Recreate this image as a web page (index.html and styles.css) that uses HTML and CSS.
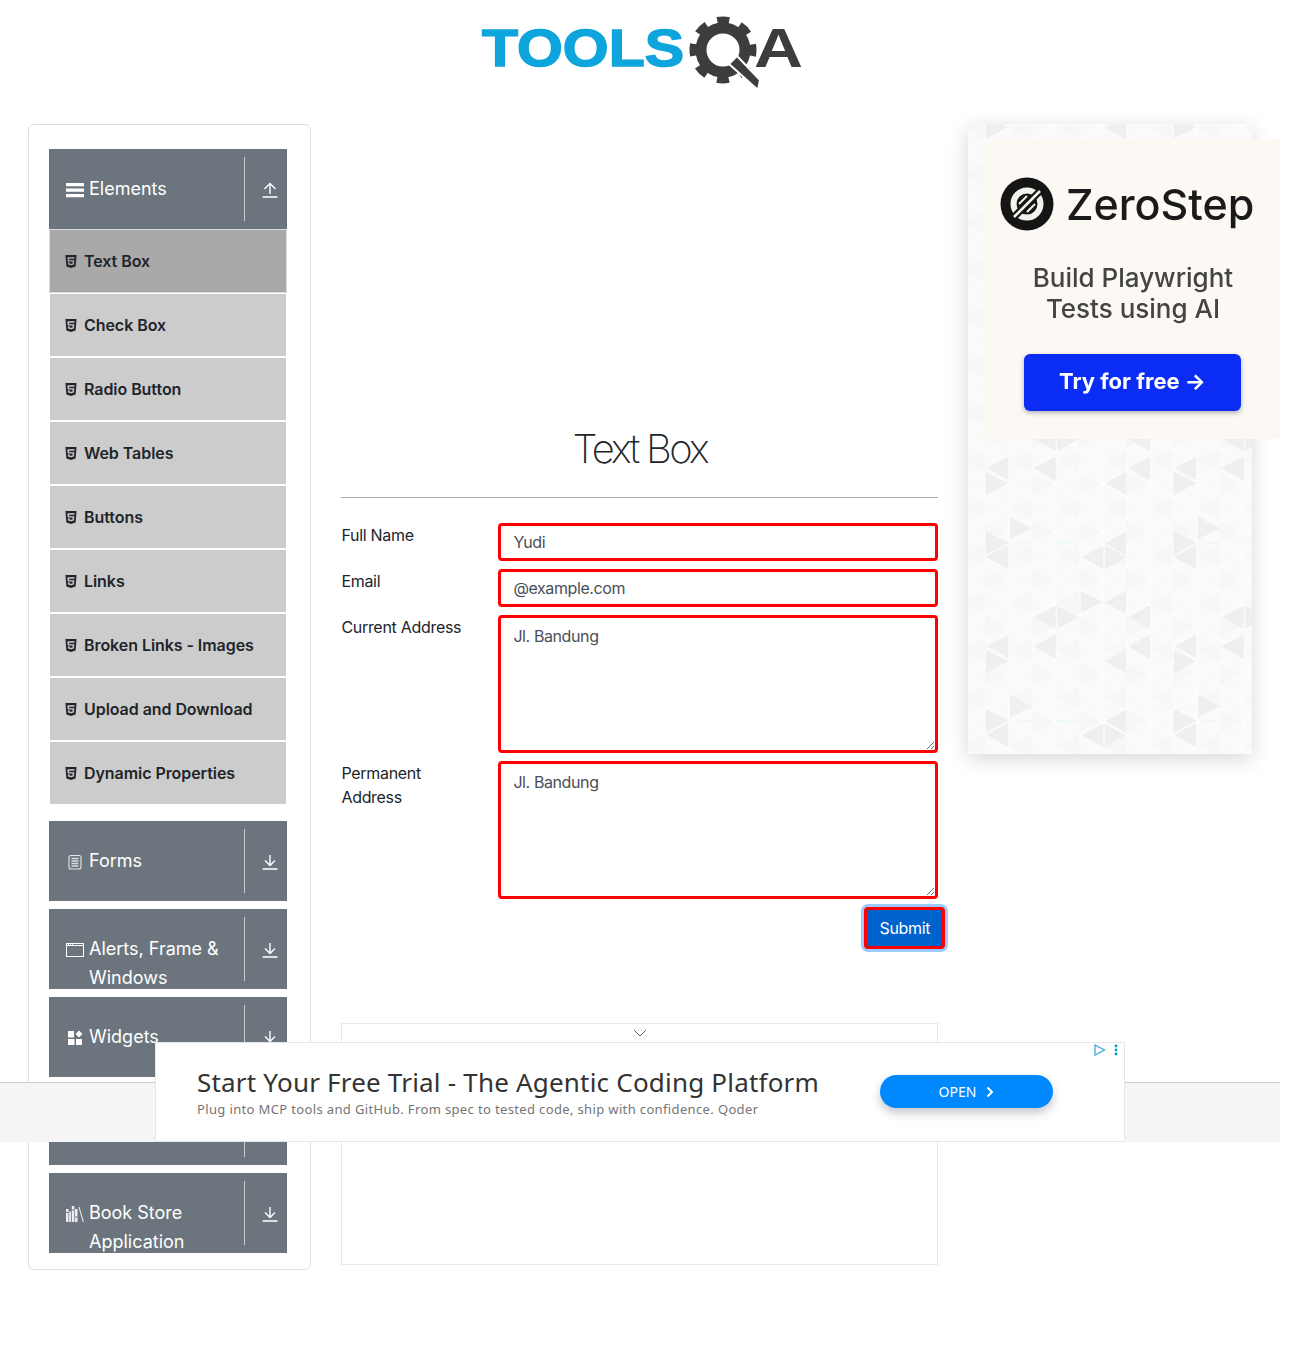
FILE: index.html
```html
<!DOCTYPE html>
<html lang="en">
<head>
<meta charset="utf-8">
<title>Text Box</title>
<link rel="stylesheet" href="styles.css">
</head>
<body>
<svg class="defs" width="0" height="0" aria-hidden="true">
  <defs>
    <symbol id="html5" viewBox="0 0 384 512"><path d="M0 32l34.9 395.8L191.5 480l157.6-52.2L384 32H0zm308.2 127.9H124.4l4.1 49.4h175.6l-13.6 148.4-97.9 27v.3h-1.1l-98.7-27.3-6-75.8h47.7L138 320l53.5 14.5 53.7-14.5 6-62.2H84.3L71.5 112.2h241.1l-4.4 47.7z"/></symbol>
    <symbol id="down" viewBox="0 0 16 16"><path d="M8 1v10M3 6.500 8 11.500l5-5M.5 15h15" fill="none" stroke="#fff" stroke-width="1.400"/></symbol>
    <symbol id="up" viewBox="0 0 16 16"><path d="M8 12V2M2.500 7 8 1.500 13.500 7M.5 15h15" fill="none" stroke="#fff" stroke-width="1.400"/></symbol>
  </defs>
</svg>

<header class="top">
  <svg class="logo" width="330" height="100" viewBox="0 0 330 100">
    <text x="5" y="66" class="logo-blue" textLength="202" lengthAdjust="spacingAndGlyphs">TOOLS</text>
    <circle cx="246" cy="50" r="22" fill="none" stroke="#3d3d3d" stroke-width="11"/>
    <circle cx="246" cy="50" r="30" fill="none" stroke="#3d3d3d" stroke-width="7" stroke-dasharray="12 11.56" stroke-dashoffset="6"/>
    <polygon points="252,64 260,56 283,80 281,90" fill="#3d3d3d" stroke="#fff" stroke-width="2"/>
    <text x="277" y="67" class="logo-dark" textLength="49" lengthAdjust="spacingAndGlyphs">A</text>
  </svg>
</header>

<main class="page">
  <aside class="side">
    <div class="elements">
      <div class="group">
        <div class="group-label">
          <svg class="gicon" viewBox="0 0 18 18"><path d="M0 2h18v3.200H0zM0 7.500h18v3.200H0zM0 13h18v3.200H0z" fill="#fff"/></svg>
          <span>Elements</span>
        </div>
        <div class="group-toggle"><svg class="arrow"><use href="#up"/></svg></div>
      </div>
      <ul class="items">
        <li class="item active"><svg class="h5"><use href="#html5"/></svg>Text Box</li>
        <li class="item"><svg class="h5"><use href="#html5"/></svg>Check Box</li>
        <li class="item"><svg class="h5"><use href="#html5"/></svg>Radio Button</li>
        <li class="item"><svg class="h5"><use href="#html5"/></svg>Web Tables</li>
        <li class="item"><svg class="h5"><use href="#html5"/></svg>Buttons</li>
        <li class="item"><svg class="h5"><use href="#html5"/></svg>Links</li>
        <li class="item"><svg class="h5"><use href="#html5"/></svg>Broken Links - Images</li>
        <li class="item"><svg class="h5"><use href="#html5"/></svg>Upload and Download</li>
        <li class="item"><svg class="h5"><use href="#html5"/></svg>Dynamic Properties</li>
      </ul>
    </div>
    <div class="group">
      <div class="group-label">
        <svg class="gicon" viewBox="0 0 18 18"><rect x="3" y="2.500" width="12" height="13.500" rx="2" fill="none" stroke="#e4e6e8" stroke-width="1.100"/><path d="M5.500 5.500h7M5.500 8h7M5.500 10.500h7M5.500 13h7" stroke="#d6d9dc" stroke-width="1.300"/></svg>
        <span>Forms</span>
      </div>
      <div class="group-toggle"><svg class="arrow"><use href="#down"/></svg></div>
    </div>
    <div class="group">
      <div class="group-label">
        <svg class="gicon" viewBox="0 0 18 18"><rect x=".5" y="2.500" width="17" height="13" fill="none" stroke="#fff" stroke-width="1"/><path d="M1 4.500h16" stroke="#fff" stroke-width="1"/><path d="M2 3.300h1M4 3.300h1M6 3.300h1" stroke="#fff" stroke-width="1"/></svg>
        <span>Alerts, Frame &amp; Windows</span>
      </div>
      <div class="group-toggle"><svg class="arrow"><use href="#down"/></svg></div>
    </div>
    <div class="group">
      <div class="group-label">
        <svg class="gicon" viewBox="0 0 18 18"><path d="M2 2h6v6.500H2zM2 10h6.500v6H2zM10 10h6v6h-6zM13 1.500l3.500 3.500-3.500 3.500L9.500 5z" fill="#fff"/></svg>
        <span>Widgets</span>
      </div>
      <div class="group-toggle"><svg class="arrow"><use href="#down"/></svg></div>
    </div>
    <div class="group">
      <div class="group-label">
        <svg class="gicon" viewBox="0 0 18 18"><rect x="3" y="3" width="12" height="12" fill="#fff"/></svg>
        <span>Interactions</span>
      </div>
      <div class="group-toggle"><svg class="arrow"><use href="#down"/></svg></div>
    </div>
    <div class="group">
      <div class="group-label">
        <svg class="gicon" viewBox="0 0 18 18"><path d="M0 4h2.500v13H0zM3.200 6.500H5V17H3.200zM5.800 1h2.500v16H5.800zM9 4h2.500v13H9zM12.500 2l1-.3 4.300 15-1 .3z" fill="#eceeef"/><path d="M0 7.500h2.500M5.800 5h2.500M9 12h2.500" stroke="#6c757d" stroke-width="1"/></svg>
        <span>Book Store Application</span>
      </div>
      <div class="group-toggle"><svg class="arrow"><use href="#down"/></svg></div>
    </div>
  </aside>

  <section class="center">
    <h1 class="title">Text Box</h1>
    <hr class="rule">
    <form class="form">
      <label class="lbl">Full Name</label>
      <input class="field" type="text" value="Yudi">
      <label class="lbl">Email</label>
      <input class="field" type="text" value="@example.com">
      <label class="lbl">Current Address</label>
      <textarea class="field area">Jl. Bandung</textarea>
      <label class="lbl">Permanent Address</label>
      <textarea class="field area">Jl. Bandung</textarea>
      <button class="submit" type="button">Submit</button>
    </form>
    <div class="adslot">
      <svg class="caret" width="14" height="8" viewBox="0 0 14 8"><path d="M1 1l6 6 6-6" fill="none" stroke="#666" stroke-width="1"/></svg>
    </div>
  </section>

  <aside class="right">
    <svg class="tess" width="284" height="630" aria-hidden="true">
      <defs>
        <pattern id="lat" patternUnits="userSpaceOnUse" width="47" height="47.500" viewBox="0 0 141 142" patternTransform="translate(-8 16)">
          <rect width="141" height="142" fill="#fafafa"/>
          <path d="M4 0 4 142M74.500 0 74.500 142" stroke="#fff" stroke-width="2"/>
          <path d="M4 35 74.500 0M4 35 74.500 71M4 106 74.500 71M4 106 74.500 142M74.500 0 145 35M74.500 71 145 35M74.500 71 145 106M74.500 142 145 106" stroke="#fff" stroke-width="2.500" fill="none"/>
          <path d="M74.500 0 141 35 74.500 71zM4 106 74.500 71V142z" fill="#f7f7f7"/>
        </pattern>
        <pattern id="tri" patternUnits="userSpaceOnUse" width="188" height="178" viewBox="0 0 564 534" patternTransform="translate(-8 138)">
          <g fill="#efefef">
            <path d="M80 85 145 50V120zM220 85 287 50V122zM505 85 568 50V122zM78 95 145 130 78 165zM435 130 498 95V165zM150 230 215 265 150 298zM78 272 145 308 78 345zM78 350 145 315V388zM435 310 498 275V345zM365 352 430 317V388zM435 317 498 352 435 388zM362 453 428 487 362 520zM435 487 498 452V520zM222 532 287 497V567zM292 497 355 532 292 567zM505 532 568 497V567zM222 -2 287 -37V33zM292 -37 355 -2 292 33zM505 -2 568 -37V33z"/>
            <path d="M-59 85 6 50V120zM-59 -2 6 -37V33zM-59 532 6 497V567z"/>
          </g>
          <path d="M170 308h45M290 308h65" stroke="#e9f9f7" stroke-width="4"/>
        </pattern>
      </defs>
      <rect width="284" height="630" fill="url(#lat)"/>
      <rect width="284" height="630" fill="url(#tri)"/>
    </svg>
    <div class="zs">
      <div class="zs-brand">
        <svg class="zs-logo" width="54" height="54" viewBox="0 0 54 54">
          <circle cx="27" cy="27" r="26.500" fill="#151515"/>
          <circle cx="27" cy="27" r="13.500" fill="none" stroke="#f4f1ec" stroke-width="6"/>
          <path d="M13 41 41 13" stroke="#151515" stroke-width="7"/>
          <path d="M14 40 40 14" stroke="#f4f1ec" stroke-width="2.500"/>
          <path d="M19 27l8-8M27 35l8-8" stroke="#f4f1ec" stroke-width="2"/>
        </svg>
        <span class="zs-name">ZeroStep</span>
      </div>
      <p class="zs-copy">Build Playwright<br>Tests using AI</p>
      <div class="zs-btn">Try for free →</div>
    </div>
  </aside>
</main>

<div class="banner">
  <div class="banner-ad">
    <div class="ad-text">
      <div class="ad-title">Start Your Free Trial - The Agentic Coding Platform</div>
      <div class="ad-sub">Plug into MCP tools and GitHub. From spec to tested code, ship with confidence. Qoder</div>
    </div>
    <div class="ad-open">OPEN
      <svg width="8" height="12" viewBox="0 0 8 12"><path d="M1.500 1.500 6 6l-4.500 4.500" fill="none" stroke="#fff" stroke-width="2"/></svg>
    </div>
    <div class="ad-choices">
      <svg width="12" height="12" viewBox="0 0 12 12"><path d="M1 1v10l9.500-5z" fill="none" stroke="#3fa9e0" stroke-width="1.300"/></svg>
      <svg width="4" height="12" viewBox="0 0 4 12"><circle cx="2" cy="2" r="1.400" fill="#00a0c6"/><circle cx="2" cy="6" r="1.400" fill="#00a0c6"/><circle cx="2" cy="10" r="1.400" fill="#00a0c6"/></svg>
    </div>
  </div>
</div>
</body>
</html>
```

FILE: styles.css
```css
* { box-sizing: border-box; }

html, body { margin: 0; padding: 0; }

body {
  position: relative;
  width: 1280px;
  min-height: 1370px;
  background: #fff;
  color: #212529;
  font-family: Inter, "Liberation Sans", sans-serif;
  font-size: 16px;
  line-height: 24px;
}

.defs { position: absolute; }

.top {
  display: flex;
  justify-content: center;
  height: 124px;
  padding-left: 3px;
}

.logo { display: block; filter: blur(.3px); }

.logo-blue {
  font: 700 52px "Liberation Sans", sans-serif;
  fill: #0ea5dd;
  stroke: #0ea5dd;
  stroke-width: 1.500px;
}

.logo-dark {
  font: 700 55px "Liberation Sans", sans-serif;
  fill: #3d3d3d;
}

.page {
  display: flex;
  align-items: flex-start;
  gap: 30px;
  padding-left: 28px;
}

/* sidebar */
.side {
  flex: none;
  width: 283.400px;
  padding: 24px 24px 16px 20px;
  border: 1px solid #dfdfdf;
  border-radius: 6px;
  display: flex;
  flex-direction: column;
  gap: 8px;
}

.elements { margin-bottom: 8px; }

.group {
  display: flex;
  width: 238px;
  height: 80px;
  padding: 8px 0;
  background: #6c757d;
  color: #fff;
  overflow: hidden;
}

.group-label {
  flex: none;
  width: 195px;
  height: 90px;
  padding: 17px 0 0 40px;
  position: relative;
  font-size: 18px;
  line-height: 29px;
  overflow: visible;
}

.gicon {
  position: absolute;
  left: 17px;
  top: 24px;
  width: 18px;
  height: 18px;
}

.group-toggle {
  flex: 1;
  display: flex;
  justify-content: center;
  align-items: center;
  padding-top: 2px;
  border-left: 1px solid #c9ccce;
  padding-left: 7px;
}

.arrow { width: 16px; height: 16px; }

.items { list-style: none; margin: 0; padding: 0; width: 238px; }

.item {
  display: flex;
  align-items: center;
  height: 64px;
  padding-left: 15px;
  background: #ccc;
  border: 1px solid #fff;
  font-weight: 600;
  font-size: 16px;
  letter-spacing: -.06px;
  color: #212529;
}

.item.active {
  background: #a9a9a9;
  border-color: #dadde0;
}

.h5 {
  width: 12px;
  height: 15px;
  margin-right: 7px;
  fill: #23272b;
}

/* centre */
.center { flex: none; width: 596.600px; }

.title {
  margin: 0;
  padding-top: 301px;
  height: 349px;
  text-align: center;
  font-size: 40px;
  line-height: 48px;
  font-weight: 200;
  letter-spacing: -2.700px;
  color: #212529;
}

.rule {
  margin: 24px 0 25px;
  border: 0;
  border-top: 1px solid #aaa;
}

.form {
  display: grid;
  grid-template-columns: 157px 440px;
  row-gap: 8px;
  align-items: start;
}

.lbl {
  padding-right: 20px;
  letter-spacing: -.3px;
  color: #212529;
}

.field {
  display: block;
  width: 440px;
  height: 38px;
  margin: 0;
  padding: 0 12px;
  border: 3px solid #f00;
  border-radius: 4px;
  background: #fff;
  color: #495057;
  font: 16px/24px Inter, "Liberation Sans", sans-serif;
  letter-spacing: -.4px;
  outline: 0;
}

.area {
  height: 138px;
  padding-top: 6px;
  padding-bottom: 6px;
}

.submit {
  grid-column: 2;
  justify-self: end;
  width: 81px;
  height: 42px;
  margin-right: -7px;
  padding: 0;
  border: 3px solid #f00;
  border-radius: 4px;
  background: #0062cc;
  color: #fff;
  font: 16px/24px Inter, "Liberation Sans", sans-serif;
  letter-spacing: -.3px;
  box-shadow: 0 0 0 3px #9ccbff;
}

.adslot {
  position: relative;
  height: 242px;
  margin-top: 74px;
  border: 1px solid #e8e8e8;
  display: flex;
  justify-content: center;
  padding-top: 5px;
}

.caret { display: block; }

/* right ad */
.right {
  position: relative;
  flex: none;
  width: 284px;
  height: 630px;
  box-shadow: 0 5px 20px rgba(0, 0, 0, .16);
}

.tess { display: block; }

.zs {
  position: absolute;
  left: 15px;
  top: 15px;
  width: 300px;
  height: 300px;
  background: #fcf8f3;
  display: flex;
  flex-direction: column;
  align-items: center;
  filter: blur(.35px);
}

.zs-brand {
  display: flex;
  align-items: center;
  gap: 12px;
  width: 100%;
  padding: 38px 0 0 17px;
  height: 92px;
}

.zs-logo { flex: none; }

.zs-name {
  font-size: 43px;
  line-height: 54px;
  font-weight: 500;
  color: #1a1a1a;
  white-space: nowrap;
}

.zs-copy {
  margin: 31px 0 0;
  width: 100%;
  text-align: center;
  font-size: 26px;
  line-height: 31px;
  font-weight: 500;
  color: #444;
}

.zs-btn {
  width: 217px;
  height: 57px;
  margin: 30px 1px 0 0;
  border-radius: 6px;
  background: #0a2cf5;
  color: #fff;
  text-align: center;
  font-size: 22px;
  line-height: 55px;
  font-weight: 700;
  box-shadow: 0 2px 5px rgba(0, 0, 40, .3);
}

/* fixed banner */
.banner {
  position: absolute;
  left: 0;
  top: 1082px;
  width: 1280px;
  height: 60px;
  background: #f5f5f5;
  border-top: 1px solid #ccc;
}

.banner-ad {
  position: absolute;
  left: 155px;
  bottom: 0;
  width: 970px;
  height: 100px;
  background: #fff;
  border: 1px solid #e6e6e6;
  display: flex;
  align-items: center;
  font-family: "Noto Sans", sans-serif;
}

.ad-text { flex: none; width: 724px; padding: 0 0 0 41px; }

.ad-title {
  font-size: 26px;
  line-height: 32px;
  letter-spacing: .2px;
  color: #333;
  white-space: nowrap;
}

.ad-sub {
  margin-top: 2px;
  font-size: 13px;
  line-height: 18px;
  letter-spacing: .36px;
  color: #757575;
  white-space: nowrap;
}

.ad-open {
  flex: none;
  display: flex;
  align-items: center;
  justify-content: center;
  gap: 10px;
  width: 173px;
  height: 33px;
  margin-top: -1px;
  border-radius: 17px;
  background: #0088ff;
  color: #fff;
  font-size: 14px;
  box-shadow: 0 5px 10px rgba(60, 70, 90, .3);
}

.ad-choices {
  position: absolute;
  right: 6px;
  top: 1px;
  display: flex;
  align-items: center;
  gap: 8px;
}
```
